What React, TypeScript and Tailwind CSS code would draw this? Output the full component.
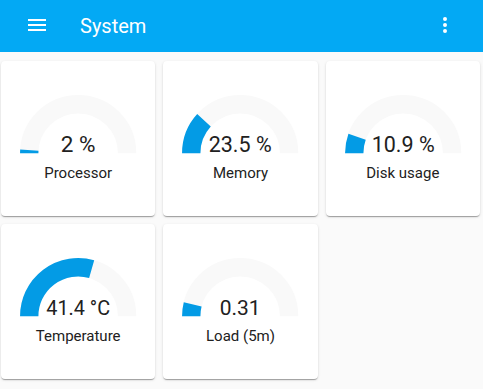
import React from "react";

type Gauge = { value: string; name: string; fraction: number; fs: number };

const gauges: Gauge[] = [
  { value: "2 %", name: "Processor", fraction: 0.02, fs: 22.5 },
  { value: "23.5 %", name: "Memory", fraction: 0.235, fs: 21.5 },
  { value: "10.9 %", name: "Disk usage", fraction: 0.109, fs: 21.5 },
  { value: "41.4 °C", name: "Temperature", fraction: 0.589, fs: 19.8 },
  { value: "0.31", name: "Load (5m)", fraction: 0.0775, fs: 21 },
];

function GaugeCard({ g }: { g: Gauge }) {
  const a = g.fraction * Math.PI;
  const x = (-40 * Math.cos(a)).toFixed(3);
  const y = (-40 * Math.sin(a)).toFixed(3);
  const scale = 122.3 / 100;
  return (
    <div className="flex h-[155px] flex-col items-center justify-center rounded-[4px] bg-white p-4 shadow-[0px_2px_1px_-1px_rgba(0,0,0,0.2),0px_1px_1px_0px_rgba(0,0,0,0.14),0px_1px_3px_0px_rgba(0,0,0,0.12)]">
      <svg
        viewBox="-50 -50 100 50"
        className="block w-full overflow-visible"
        style={{ height: 61.2 }}
      >
        <path d="M -40 0 A 40 40 0 0 1 40 0" fill="none" stroke="#f9f9f9" strokeWidth={15} />
        <path d={`M -40 0 A 40 40 0 0 1 ${x} ${y}`} fill="none" stroke="#039be5" strokeWidth={15} />
        <text
          x={0}
          y={-0.6}
          textAnchor="middle"
          fill="#212121"
          fontFamily="Roboto, sans-serif"
          fontSize={g.fs / scale}
        >
          {g.value}
        </text>
      </svg>
      <div className="mt-[9px] w-full text-center text-[15px] leading-normal text-[#212121] [font-family:Roboto,sans-serif]">
        {g.name}
      </div>
    </div>
  );
}

export default function App() {
  return (
    <div className="min-h-[389px] w-[483px] bg-[#fafafa] [font-family:Roboto,sans-serif]">
      <header className="flex h-[52px] items-center bg-[#03a9f4] pl-[13px] pr-[14px] text-white">
        <button className="mb-[2px] flex h-12 w-12 items-center justify-center">
          <svg width="24" height="24" viewBox="0 0 24 24" fill="white">
            <path d="M3,6H21V8H3V6M3,11H21V13H3V11M3,16H21V18H3V16Z" />
          </svg>
        </button>
        <div className="ml-[19px] flex-1 text-[20px] font-normal">System</div>
        <button className="mb-[2px] flex h-12 w-12 items-center justify-center">
          <svg width="24" height="24" viewBox="0 0 24 24" fill="white">
            <path d="M12,16A2,2 0 0,1 14,18A2,2 0 0,1 12,20A2,2 0 0,1 10,18A2,2 0 0,1 12,16M12,10A2,2 0 0,1 14,12A2,2 0 0,1 12,14A2,2 0 0,1 10,12A2,2 0 0,1 12,10M12,4A2,2 0 0,1 14,6A2,2 0 0,1 12,8A2,2 0 0,1 10,6A2,2 0 0,1 12,4Z" />
          </svg>
        </button>
      </header>
      <main className="grid grid-cols-3 gap-2 pb-2 pl-[1px] pr-[3px] pt-[9px]">
        {gauges.map((g) => (
          <GaugeCard key={g.name} g={g} />
        ))}
      </main>
    </div>
  );
}
